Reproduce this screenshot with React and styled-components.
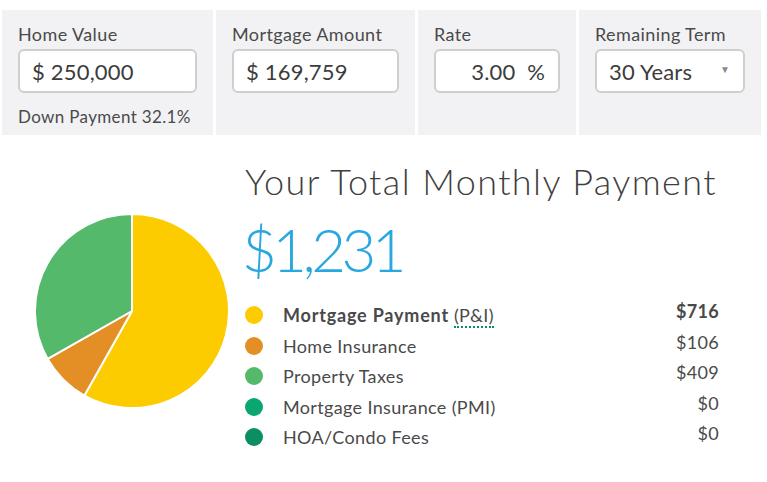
import React from "react";
import styled, { createGlobalStyle } from "styled-components";

const GlobalStyle = createGlobalStyle`
  body {
    margin: 0;
    background: #fff;
    font-family: Lato, "Open Sans", sans-serif;
    color: #4a4a4a;
  }
`;

const ITEMS = [
  { label: "Mortgage Payment", note: "(P&I)", amount: 716, color: "#fccc00", bold: true },
  { label: "Home Insurance", amount: 106, color: "#e38f26" },
  { label: "Property Taxes", amount: 409, color: "#54b96b" },
  { label: "Mortgage Insurance (PMI)", amount: 0, color: "#0aa870" },
  { label: "HOA/Condo Fees", amount: 0, color: "#0b8e63" },
];

const polar = (cx, cy, r, deg) => {
  const a = ((deg - 90) * Math.PI) / 180;
  return [cx + r * Math.cos(a), cy + r * Math.sin(a)];
};

const Pie = ({ items }) => {
  const total = items.reduce((s, i) => s + i.amount, 0);
  let start = 0;
  return (
    <svg width="198" height="198" viewBox="0 0 198 198">
      {items
        .filter((i) => i.amount > 0)
        .map((i) => {
          const sweep = (i.amount / total) * 360;
          const [x1, y1] = polar(99, 99, 97, start);
          const [x2, y2] = polar(99, 99, 97, start + sweep);
          const large = sweep > 180 ? 1 : 0;
          const d = `M99 99 L${x1} ${y1} A97 97 0 ${large} 1 ${x2} ${y2} Z`;
          start += sweep;
          return <path key={i.label} d={d} fill={i.color} stroke="#fff" strokeWidth="2" strokeLinejoin="round" />;
        })}
    </svg>
  );
};

const App = () => {
  return (
    <>
      <GlobalStyle />
      <Inputs>
        <Panel $w={211}>
          <Label>Home Value</Label>
          <Field $w={179}>
            <span>$ 250,000</span>
          </Field>
          <Hint>Down Payment 32.1%</Hint>
        </Panel>
        <Panel $w={199}>
          <Label>Mortgage Amount</Label>
          <Field $w={167}>
            <span>$ 169,759</span>
          </Field>
        </Panel>
        <Panel $w={158}>
          <Label>Rate</Label>
          <Field $w={126} $right>
            <span>3.00&nbsp;&nbsp;%</span>
          </Field>
        </Panel>
        <Panel $w={182}>
          <Label>Remaining Term</Label>
          <Field $w={150}>
            <span>30 Years</span>
            <Caret>▼</Caret>
          </Field>
        </Panel>
      </Inputs>
      <Summary>
        <ChartCol>
          <Pie items={ITEMS} />
        </ChartCol>
        <Details>
          <Title>Your Total Monthly Payment</Title>
          <Total>$1,231</Total>
          <Legend>
            {ITEMS.map((i) => (
              <Row key={i.label}>
                <Dot $color={i.color} />
                <Name $bold={i.bold}>
                  {i.label}
                  {i.note && <Note>{i.note}</Note>}
                </Name>
                <Amount $bold={i.bold}>${i.amount}</Amount>
              </Row>
            ))}
          </Legend>
        </Details>
      </Summary>
    </>
  );
};

export default App;

const Inputs = styled.div`
  display: flex;
  gap: 3px;
  margin-top: 10px;
  padding-left: 2px;
`;

const Panel = styled.div`
  width: ${(p) => p.$w}px;
  height: 125px;
  box-sizing: border-box;
  padding: 14px 16px 0;
  background: #f2f2f4;
`;

const Label = styled.div`
  font-size: 18px;
  line-height: 20px;
  letter-spacing: 0.4px;
  color: #4a4a4a;
`;

const Field = styled.div`
  margin-top: 5px;
  width: ${(p) => p.$w}px;
  height: 44px;
  box-sizing: border-box;
  border: 2px solid #cfcfcf;
  border-radius: 6px;
  background: #fff;
  display: flex;
  align-items: center;
  justify-content: ${(p) => (p.$right ? "flex-end" : "space-between")};
  padding: 0 13px 0 12px;
  font-size: 22px;
  letter-spacing: 0.2px;
  color: #3c3c3c;
`;

const Caret = styled.span`
  font-size: 10px;
  color: #8a8a8a;
  margin-top: -4px;
`;

const Hint = styled.div`
  margin-top: 13px;
  font-size: 17px;
  letter-spacing: 0.35px;
  color: #4a4a4a;
`;

const Summary = styled.div`
  display: flex;
  margin-top: 25px;
`;

const ChartCol = styled.div`
  width: 245px;
  padding: 52px 0 0 33px;
  box-sizing: border-box;
`;

const Details = styled.div`
  width: 474px;
  display: flex;
  flex-direction: column;
`;

const Title = styled.div`
  font-size: 36px;
  font-weight: 300;
  line-height: 43px;
  letter-spacing: 1.4px;
  color: #3f3f3f;
`;

const Total = styled.div`
  font-size: 60px;
  font-weight: 300;
  line-height: 72px;
  letter-spacing: -4.5px;
  color: #29a8e0;
  margin: 10px 0 0 -3px;
`;

const Legend = styled.div`
  margin-top: 15px;
  display: flex;
  flex-direction: column;
`;

const Row = styled.div`
  display: flex;
  align-items: center;
  height: 30.5px;
`;

const Dot = styled.span`
  width: 18px;
  height: 18px;
  border-radius: 50%;
  background: ${(p) => p.$color};
  flex: none;
`;

const Name = styled.span`
  margin-left: 20px;
  flex: 1;
  font-size: 18px;
  font-weight: ${(p) => (p.$bold ? 700 : 400)};
  letter-spacing: ${(p) => (p.$bold ? "0.8px" : "0.35px")};
  color: #4a4a4a;
`;

const Note = styled.span`
  margin-left: 5px;
  font-weight: 400;
  letter-spacing: 0.35px;
  border-bottom: 2px dotted #0b8e63;
`;

const Amount = styled.span`
  align-self: flex-start;
  font-size: 18px;
  font-weight: ${(p) => (p.$bold ? 700 : 400)};
  letter-spacing: 0.3px;
  color: #4a4a4a;
`;
